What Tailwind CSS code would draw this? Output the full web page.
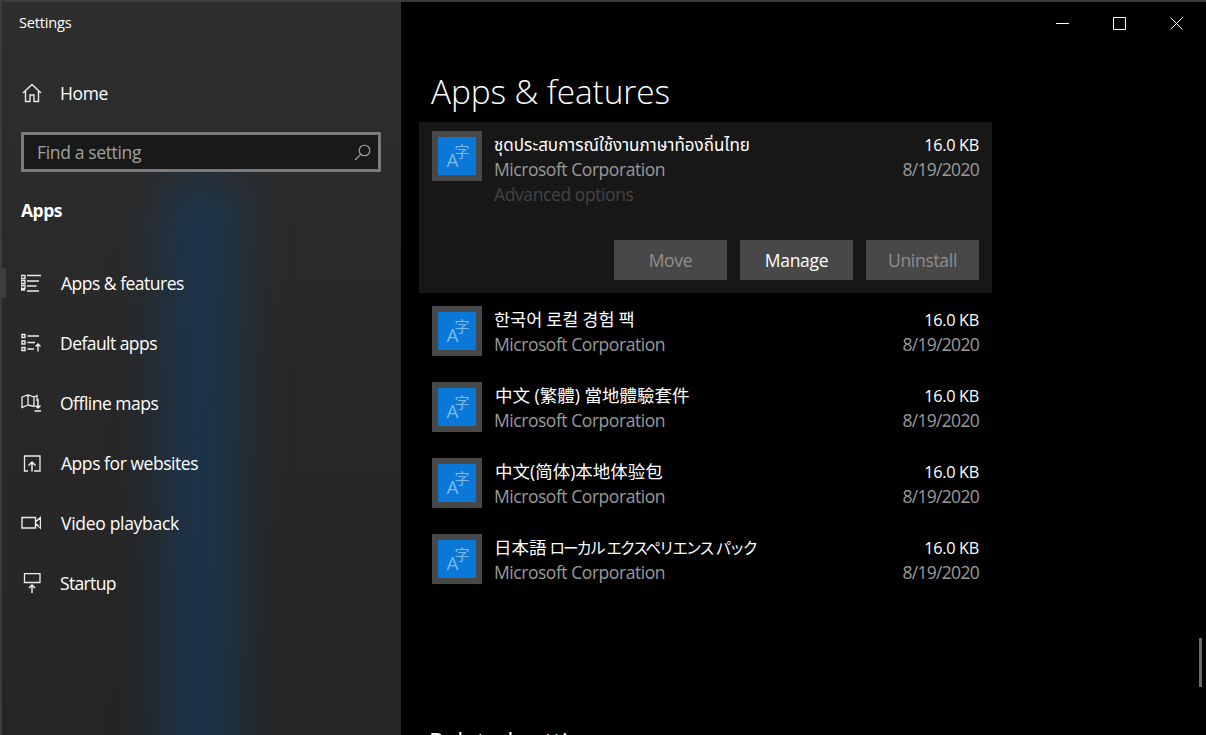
<!DOCTYPE html>
<html lang="en">
<head>
  <meta charset="UTF-8" />
  <title>Settings</title>
  <script src="https://cdn.jsdelivr.net/npm/@tailwindcss/browser@4"></script>
</head>
<body class="bg-black overflow-hidden font-['Open_Sans','Noto_Sans','Noto_Sans_CJK_KR',sans-serif] text-white">
  <div class="flex w-[1206px] h-[735px] overflow-hidden border-t-2 border-l-2 border-[#3c3c3c]">

    <!-- sidebar -->
    <aside class="relative w-[399px] shrink-0 h-full overflow-hidden bg-linear-to-b from-[#2e2e2e] via-[#282828] to-[#252525]">
      <div class="absolute left-[162px] top-[180px] w-[76px] h-[600px] bg-[#134068]/55 blur-[24px]"></div>

      <div class="relative flex flex-col h-full">
        <div class="h-[41px] pl-[17px] pt-[10px] text-[14.6px] leading-5 tracking-[-0.2px]">Settings</div>

        <div class="flex items-center h-[60px] mt-[20px]">
          <svg class="ml-[20px] w-5 h-5" viewBox="0 0 20 20" fill="none" stroke="#e8e8e8" stroke-width="1.4"><path d="M1 10 10 1.500 19 10M3.500 8V18.500H8V12H12V18.500H16.500V8"/></svg>
          <span class="ml-[18px] text-[17.5px] tracking-[-0.4px]">Home</span>
        </div>

        <div class="flex items-center justify-between ml-[19px] w-[360px] h-[40px] mt-[9px] border-[3px] border-[#7a7a7a] bg-[#191919] pl-[13px] pr-[7px]">
          <span class="text-[17.5px] tracking-[-0.35px] text-[#a0a0a0]">Find a setting</span>
          <svg class="w-[17px] h-[17px]" viewBox="0 0 17 17" fill="none" stroke="#a8a8a8" stroke-width="1.1"><circle cx="10.500" cy="6.500" r="5.300"/><path d="M6.700 10.300 1 16"/></svg>
        </div>

        <div class="ml-[19px] mt-[26px] h-[24px] leading-6 text-[17.5px] font-bold tracking-[-0.5px]">Apps</div>

        <nav class="mt-[31px] flex flex-col">
          <div class="relative flex items-center h-[60px]">
            <div class="absolute left-0 top-[15px] w-[4px] h-[30px] bg-[#3d3d3d]"></div>
            <svg class="ml-[19px] w-5 h-5" viewBox="0 0 20 20" fill="none" stroke="#ececec" stroke-width="1.6"><path d="M0 2.500H4V5.500H0ZM0 7.500H4V10.500H0ZM0 12.500H4V15.500H0ZM0 17H4" stroke-width="1.300"/><path d="M6 2.500H20M6 8H18M6 13H15.500M6 18H18"/></svg>
            <span class="ml-[20px] text-[17.5px] tracking-[-0.5px]">Apps &amp; features</span>
          </div>
          <div class="flex items-center h-[60px]">
            <svg class="ml-[19px] w-5 h-5" viewBox="0 0 20 20" fill="none" stroke="#ececec" stroke-width="1.400"><path d="M1 1.500H4V4.500H1ZM1 8H4V11H1ZM1 14.500H4V17.500H1Z"/><path d="M6.500 3H18M6.500 9.500H14M6.500 16H13"/><path d="M17 18.500V11M14.500 13.500 17 11 19.500 13.500"/></svg>
            <span class="ml-[19px] text-[17.5px] tracking-[-0.55px]">Default apps</span>
          </div>
          <div class="flex items-center h-[60px]">
            <svg class="ml-[19px] w-5 h-5" viewBox="0 0 20 20" fill="none" stroke="#ececec" stroke-width="1.300"><path d="M1 4 7 2 13 4V13.500L7 12 1 14.500ZM7 2V12M13 4 16 2.500V8"/><path d="M17 6V15M14.500 12.500 17 15 19.500 12.500M13.500 18H20" stroke-width="1.500"/></svg>
            <span class="ml-[19px] text-[17.5px] tracking-[-0.5px]">Offline maps</span>
          </div>
          <div class="flex items-center h-[60px]">
            <svg class="ml-[19px] w-5 h-5" viewBox="0 0 20 20" fill="none" stroke="#ececec" stroke-width="1.300"><path d="M7 18H3.500V3H19V18H13"/><path d="M11 18.500V9M7.500 12.500 11 9 14.500 12.500" stroke-width="1.500"/></svg>
            <span class="ml-[20px] text-[17.5px] tracking-[-0.45px]">Apps for websites</span>
          </div>
          <div class="flex items-center h-[60px]">
            <svg class="ml-[19px] w-5 h-5" viewBox="0 0 20 20" fill="none" stroke="#ececec" stroke-width="1.400"><path d="M1 4.500H14.500V15H1ZM14.500 9 19.500 4.500V15L14.500 10.500"/></svg>
            <span class="ml-[20px] text-[17.5px] tracking-[-0.3px]">Video playback</span>
          </div>
          <div class="flex items-center h-[60px]">
            <svg class="ml-[19px] w-5 h-5" viewBox="0 0 20 20" fill="none" stroke="#ececec" stroke-width="1.300"><path d="M3.500 0.500H19V9.500H3.500Z"/><path d="M11 20V12M8 15 11 12 14 15" stroke-width="1.500"/></svg>
            <span class="ml-[19px] text-[17.5px] tracking-[-0.65px]">Startup</span>
          </div>
        </nav>
      </div>
    </aside>

    <!-- content -->
    <main class="relative flex-1 h-full bg-black">
      <div class="absolute right-0 top-0 flex items-center h-[42px]">
        <svg class="w-[13px] h-[13px] mr-[44px]" viewBox="0 0 13 13" stroke="#fff" fill="none"><path d="M0 6.500H13"/></svg>
        <svg class="w-[13px] h-[13px] mr-[44px]" viewBox="0 0 13 13" stroke="#fff" fill="none"><path d="M.5.500H12.500V12.500H.5Z"/></svg>
        <svg class="w-[13px] h-[13px] mr-[23px]" viewBox="0 0 13 13" stroke="#fff" fill="none"><path d="M.5.500 12.500 12.500M12.500.500 .5 12.500"/></svg>
      </div>
      <div class="absolute left-[798px] top-[636px] w-[3px] h-[49px] bg-[#6a6a6a]"></div>

      <div class="w-[573px] ml-[18px]">
        <h1 class="pl-[12px] pt-[64px] h-[120px] text-[33.4px] leading-[50px] font-light tracking-[-0.1px]">Apps &amp; features</h1>

        <section class="bg-[#171717] h-[171px] px-[13px] pt-[9px]">
          <div class="flex">
            <div class="flex items-center justify-center w-[50px] h-[50px] shrink-0 bg-[#484848]">
              <div class="flex items-center justify-center w-[38px] h-[38px] bg-[#0a78d7]">
                <svg class="w-[38px] h-[38px]" viewBox="0 0 38 38" fill="#7fb8ec" font-family="Open Sans, Noto Sans CJK SC"><text x="8.500" y="30" font-size="19">A</text><text x="16.500" y="20" font-size="15">字</text></svg>
              </div>
            </div>
            <div class="flex-1 ml-[12px]">
              <div class="flex justify-between h-[26px] leading-[26px]"><span class="pt-[2px] text-[17px] font-['Noto_Sans_Thai','DejaVu_Sans','Noto_Sans',sans-serif]">ชุดประสบการณ์ใช้งานภาษาท้องถิ่นไทย</span><span class="pt-px text-[16.3px] tracking-[-0.3px]">16.0 KB</span></div>
              <div class="flex justify-between h-[24px] leading-[25px] text-[17.5px] tracking-[-0.45px] text-[#9a9a9a]"><span>Microsoft Corporation</span><span class="tracking-[-0.7px]">8/19/2020</span></div>
              <div class="h-[25px] pt-px leading-[25px] text-[17.5px] tracking-[-0.4px] text-[#444444]">Advanced options</div>
            </div>
          </div>
          <div class="flex justify-end gap-[13px] mt-[34px]">
            <button class="w-[113px] h-[40px] bg-[#484848] text-[17.5px] tracking-[-0.3px] text-[#8f8f8f]">Move</button>
            <button class="w-[113px] h-[40px] bg-[#484848] text-[17.5px] tracking-[-0.3px] text-white">Manage</button>
            <button class="w-[113px] h-[40px] bg-[#484848] text-[17.5px] tracking-[-0.3px] text-[#8f8f8f]">Uninstall</button>
          </div>
        </section>

        <section class="flex flex-col gap-[26px] px-[13px] pt-[13px]">
          <div class="flex">
            <div class="flex items-center justify-center w-[50px] h-[50px] shrink-0 bg-[#484848]">
              <div class="flex items-center justify-center w-[38px] h-[38px] bg-[#0a78d7]">
                <svg class="w-[38px] h-[38px]" viewBox="0 0 38 38" fill="#7fb8ec" font-family="Open Sans, Noto Sans CJK SC"><text x="8.500" y="30" font-size="19">A</text><text x="16.500" y="20" font-size="15">字</text></svg>
              </div>
            </div>
            <div class="flex-1 ml-[12px]">
              <div class="flex justify-between h-[26px] leading-[25px] text-[17.5px]"><span class="font-['Noto_Sans_CJK_KR',sans-serif]">한국어 로컬 경험 팩</span><span class="pt-[1.5px] text-[16.3px] tracking-[-0.3px]">16.0 KB</span></div>
              <div class="flex justify-between h-[24px] leading-[25px] text-[17.5px] tracking-[-0.45px] text-[#9a9a9a]"><span>Microsoft Corporation</span><span class="tracking-[-0.7px]">8/19/2020</span></div>
            </div>
          </div>
          <div class="flex">
            <div class="flex items-center justify-center w-[50px] h-[50px] shrink-0 bg-[#484848]">
              <div class="flex items-center justify-center w-[38px] h-[38px] bg-[#0a78d7]">
                <svg class="w-[38px] h-[38px]" viewBox="0 0 38 38" fill="#7fb8ec" font-family="Open Sans, Noto Sans CJK SC"><text x="8.500" y="30" font-size="19">A</text><text x="16.500" y="20" font-size="15">字</text></svg>
              </div>
            </div>
            <div class="flex-1 ml-[12px]">
              <div class="flex justify-between h-[26px] leading-[26px] text-[17.5px]"><span class="pl-px font-['Open_Sans','Noto_Sans_CJK_TC',sans-serif]">中文 (繁體) 當地體驗套件</span><span class="pt-px text-[16.3px] tracking-[-0.3px]">16.0 KB</span></div>
              <div class="flex justify-between h-[24px] leading-[25px] text-[17.5px] tracking-[-0.45px] text-[#9a9a9a]"><span>Microsoft Corporation</span><span class="tracking-[-0.7px]">8/19/2020</span></div>
            </div>
          </div>
          <div class="flex">
            <div class="flex items-center justify-center w-[50px] h-[50px] shrink-0 bg-[#484848]">
              <div class="flex items-center justify-center w-[38px] h-[38px] bg-[#0a78d7]">
                <svg class="w-[38px] h-[38px]" viewBox="0 0 38 38" fill="#7fb8ec" font-family="Open Sans, Noto Sans CJK SC"><text x="8.500" y="30" font-size="19">A</text><text x="16.500" y="20" font-size="15">字</text></svg>
              </div>
            </div>
            <div class="flex-1 ml-[12px]">
              <div class="flex justify-between h-[26px] leading-[26px] text-[17.5px]"><span class="pl-px font-['Open_Sans','Noto_Sans_CJK_SC',sans-serif]">中文(简体)本地体验包</span><span class="pt-px text-[16.3px] tracking-[-0.3px]">16.0 KB</span></div>
              <div class="flex justify-between h-[24px] leading-[25px] text-[17.5px] tracking-[-0.45px] text-[#9a9a9a]"><span>Microsoft Corporation</span><span class="tracking-[-0.7px]">8/19/2020</span></div>
            </div>
          </div>
          <div class="flex">
            <div class="flex items-center justify-center w-[50px] h-[50px] shrink-0 bg-[#484848]">
              <div class="flex items-center justify-center w-[38px] h-[38px] bg-[#0a78d7]">
                <svg class="w-[38px] h-[38px]" viewBox="0 0 38 38" fill="#7fb8ec" font-family="Open Sans, Noto Sans CJK SC"><text x="8.500" y="30" font-size="19">A</text><text x="16.500" y="20" font-size="15">字</text></svg>
              </div>
            </div>
            <div class="flex-1 ml-[12px]">
              <div class="flex justify-between h-[26px] leading-[26px] text-[17.5px]"><span class="font-['Open_Sans','Noto_Sans_CJK_JP',sans-serif] whitespace-nowrap">日本語<span class="text-[15.5px] tracking-[-2px] [word-spacing:1px]"> ローカル エクスペリエンス パック</span></span><span class="pt-px text-[16.3px] tracking-[-0.3px]">16.0 KB</span></div>
              <div class="flex justify-between h-[24px] leading-[25px] text-[17.5px] tracking-[-0.45px] text-[#9a9a9a]"><span>Microsoft Corporation</span><span class="tracking-[-0.7px]">8/19/2020</span></div>
            </div>
          </div>
        </section>

        <h2 class="ml-[10px] mt-[141px] text-[24px] leading-8 whitespace-nowrap">Related settings</h2>
      </div>
    </main>
  </div>
</body>
</html>
